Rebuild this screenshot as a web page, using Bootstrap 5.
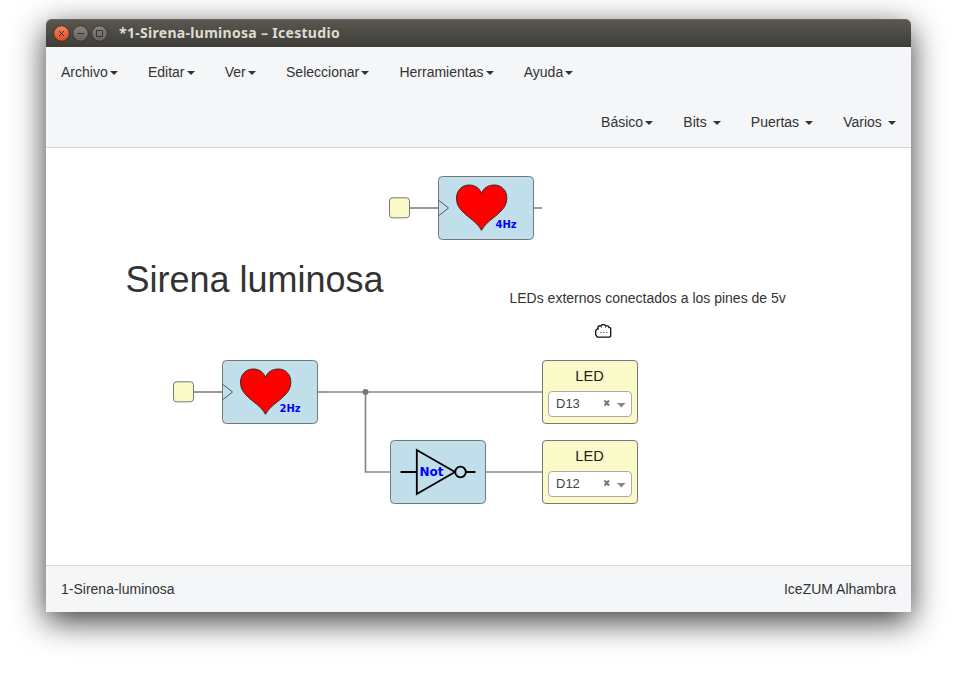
<!DOCTYPE html>
<html lang="es">
<head>
<meta charset="utf-8">
<meta name="viewport" content="width=device-width, initial-scale=1">
<title>*1-Sirena-luminosa – Icestudio</title>
<link href="https://cdn.jsdelivr.net/npm/bootstrap@5.3.0/dist/css/bootstrap.min.css" rel="stylesheet">
<style>
body { font: 14px/20px "Liberation Sans", Arial, sans-serif; color: #333; background: #fff; padding: 19px 0 0 46px; }
.app-window { width: 865px; height: 593px; border-radius: 6px 6px 0 0; box-shadow: 0 9px 32px rgba(0,0,0,.78); background: #fff; }
.titlebar { height: 28px; padding-left: 7px; border-radius: 6px 6px 0 0; background: linear-gradient(#5b5850, #3d3c37); box-shadow: inset 0 1px #6a675e; }
.window-title { font: bold 14px/28px "Noto Sans", "Open Sans", sans-serif; color: #dfdbd2; margin-left: 10px; letter-spacing: .3px; }
.menubar { height: 101px; background: #f4f6f8; border-bottom: 1px solid #d5d8da; }
.menubar .nav-link { padding: 15px; color: #333; line-height: 20px; white-space: pre; }
.menubar .dropdown-toggle::after { border-top: 4px solid; border-right: 4px solid transparent; border-left: 4px solid transparent; margin-left: 2.25px; vertical-align: middle; }
.statusbar { height: 47px; padding: 0 15px; background: #f4f6f8; border-top: 1px solid #d5dbdb; }
.led-block { width: 96px; height: 64px; left: 496px; background: #fafac8; border: 1px solid #777; border-radius: 4px; padding: 5px 5px 6px; color: #222; }
.led-one { top: 212px; }
.led-two { top: 292px; }
.led-name { font-size: 14.6px; padding-right: 1px; }
.pin-select { height: 26px; border: 1px solid #aaa; border-radius: 4px; background: #fff; font-size: 13px; line-height: 24px; color: #444; padding: 0 4px 0 7px; }
</style>
</head>
<body class="vh-100 overflow-hidden">
<main class="app-window d-flex flex-column">
  <header class="titlebar d-flex align-items-center flex-shrink-0">
    <svg width="56" height="28" viewBox="0 0 56 28" fill="none">
      <defs>
        <linearGradient id="closeFill" x2="0" y2="1"><stop stop-color="#f58563"/><stop offset="1" stop-color="#dc4a1c"/></linearGradient>
        <linearGradient id="grayFill" x2="0" y2="1"><stop stop-color="#87847c"/><stop offset="1" stop-color="#65635d"/></linearGradient>
      </defs>
      <g stroke="#35342f">
        <circle cx="8.5" cy="14.5" r="7.8" fill="url(#closeFill)"/>
        <circle cx="27.5" cy="14.5" r="7.8" fill="url(#grayFill)"/>
        <circle cx="46.5" cy="14.5" r="7.8" fill="url(#grayFill)"/>
        <path d="M6 12l5 5m0-5-5 5M24.5 14.5h6.500M43.500 11.500h6v6h-6z"/>
      </g>
    </svg>
    <span class="window-title text-nowrap">*1-Sirena-luminosa – Icestudio</span>
  </header>

  <nav class="menubar flex-shrink-0">
    <ul class="nav">
      <li><a class="nav-link dropdown-toggle" href="#">Archivo</a></li>
      <li><a class="nav-link dropdown-toggle" href="#">Editar</a></li>
      <li><a class="nav-link dropdown-toggle" href="#">Ver</a></li>
      <li><a class="nav-link dropdown-toggle" href="#">Seleccionar</a></li>
      <li><a class="nav-link dropdown-toggle" href="#">Herramientas</a></li>
      <li><a class="nav-link dropdown-toggle" href="#">Ayuda</a></li>
    </ul>
    <ul class="nav justify-content-end">
      <li><a class="nav-link dropdown-toggle" href="#">Básico</a></li>
      <li><a class="nav-link dropdown-toggle" href="#">Bits </a></li>
      <li><a class="nav-link dropdown-toggle" href="#">Puertas </a></li>
      <li><a class="nav-link dropdown-toggle" href="#">Varios </a></li>
    </ul>
  </nav>

  <section class="position-relative flex-grow-1">
    <svg class="d-block" width="865" height="417" viewBox="46 148 865 417" fill="none">
      <defs>
        <g id="clockBlock">
          <path d="M21 32h28" stroke="#8a8a8a" stroke-width="1.700"/>
          <path d="M145 32h8" stroke="#8a8a8a" stroke-width="1.700"/>
          <rect x=".5" y="21.800" width="20" height="20" rx="3" fill="#fafac8" stroke="#777"/>
          <rect x="49.500" y=".5" width="95" height="63" rx="4" fill="#c0dfeb" stroke="#777"/>
          <path d="M50 24.500l9.500 7.500-9.500 7.500" stroke="#555"/>
          <path d="M92.500 54.300C90 49.500 86 46 80 41.300C71 34 67.500 29.500 67.500 22C67.500 14.500 73 9 80 9C86.500 9 91 12.500 92.500 18C94 12.500 98.500 9 105.500 9C112.500 9 117.800 14.500 117.800 22C117.800 29.500 114 34 105 41.300C99 46 95 49.500 92.500 54.300Z" fill="#f00" stroke="#222" stroke-width=".9"/>
        </g>
      </defs>
      <path d="M326 392H542M486 472h56" stroke="#8a8a8a" stroke-width="1.700"/>
      <path d="M365.500 392V472H390" stroke="#8a8a8a" stroke-width="1.700"/>
      <circle cx="365.500" cy="392" r="3" fill="#777"/>
      <use href="#clockBlock" x="389" y="176"/>
      <use href="#clockBlock" x="173" y="360"/>
      <g font-family="DejaVu Sans, sans-serif" font-weight="bold" font-size="10" fill="#00f">
        <text x="495.500" y="228">4Hz</text>
        <text x="279.500" y="412">2Hz</text>
      </g>
      <rect x="390.500" y="440.500" width="95" height="63" rx="4" fill="#c0dfeb" stroke="#777"/>
      <path d="M400.500 472H417M466 472h9.500M416.800 450V494L455 472Z" stroke="#000" stroke-width="1.800"/>
      <circle cx="460.500" cy="472" r="5.300" stroke="#000" stroke-width="1.800"/>
      <text x="419.500" y="476" font-family="DejaVu Sans, sans-serif" font-weight="bold" font-size="12" fill="#00f">Not</text>
      <g font-family="Liberation Sans, Arial, sans-serif" fill="#333">
        <text x="125.500" y="292" font-size="36">Sirena luminosa</text>
        <text x="509.500" y="303" font-size="14">LEDs externos conectados a los pines de 5v</text>
      </g>
      <path d="M597.300 337L595.700 334.800V330.500L597.500 328.800L598.500 326H600.800L602 324.700H604.500L605.500 325.800H608L608.700 327.200L610.700 328.200V336L609.800 337.200Z" fill="#fff" stroke="#111" stroke-width="1.300" stroke-linejoin="round"/>
      <path d="M598.500 328v2M601.500 326.500v1.500M605.500 326.500v1.500M600 332.500h1.500m1.500 0h1.500m1.500 0h1.500" stroke="#444" stroke-width=".8"/>
    </svg>
    <div class="led-block led-one position-absolute d-flex flex-column justify-content-between">
      <div class="led-name text-center">LED</div>
      <div class="pin-select d-flex align-items-center">D13
        <svg class="ms-auto" width="24" height="12" viewBox="0 0 24 12"><path d="M1.500 2.500l4.500 5m0-5-4.500 5" stroke="#777" stroke-width="1.900"/><path d="M14 5h8.500l-4.250 4.500z" fill="#888"/></svg>
      </div>
    </div>
    <div class="led-block led-two position-absolute d-flex flex-column justify-content-between">
      <div class="led-name text-center">LED</div>
      <div class="pin-select d-flex align-items-center">D12
        <svg class="ms-auto" width="24" height="12" viewBox="0 0 24 12"><path d="M1.500 2.500l4.500 5m0-5-4.500 5" stroke="#777" stroke-width="1.900"/><path d="M14 5h8.500l-4.250 4.500z" fill="#888"/></svg>
      </div>
    </div>
  </section>

  <footer class="statusbar d-flex align-items-center justify-content-between flex-shrink-0">
    <span>1-Sirena-luminosa</span>
    <span>IceZUM Alhambra</span>
  </footer>
</main>
<script src="https://cdn.jsdelivr.net/npm/bootstrap@5.3.0/dist/js/bootstrap.bundle.min.js"></script>
</body>
</html>
